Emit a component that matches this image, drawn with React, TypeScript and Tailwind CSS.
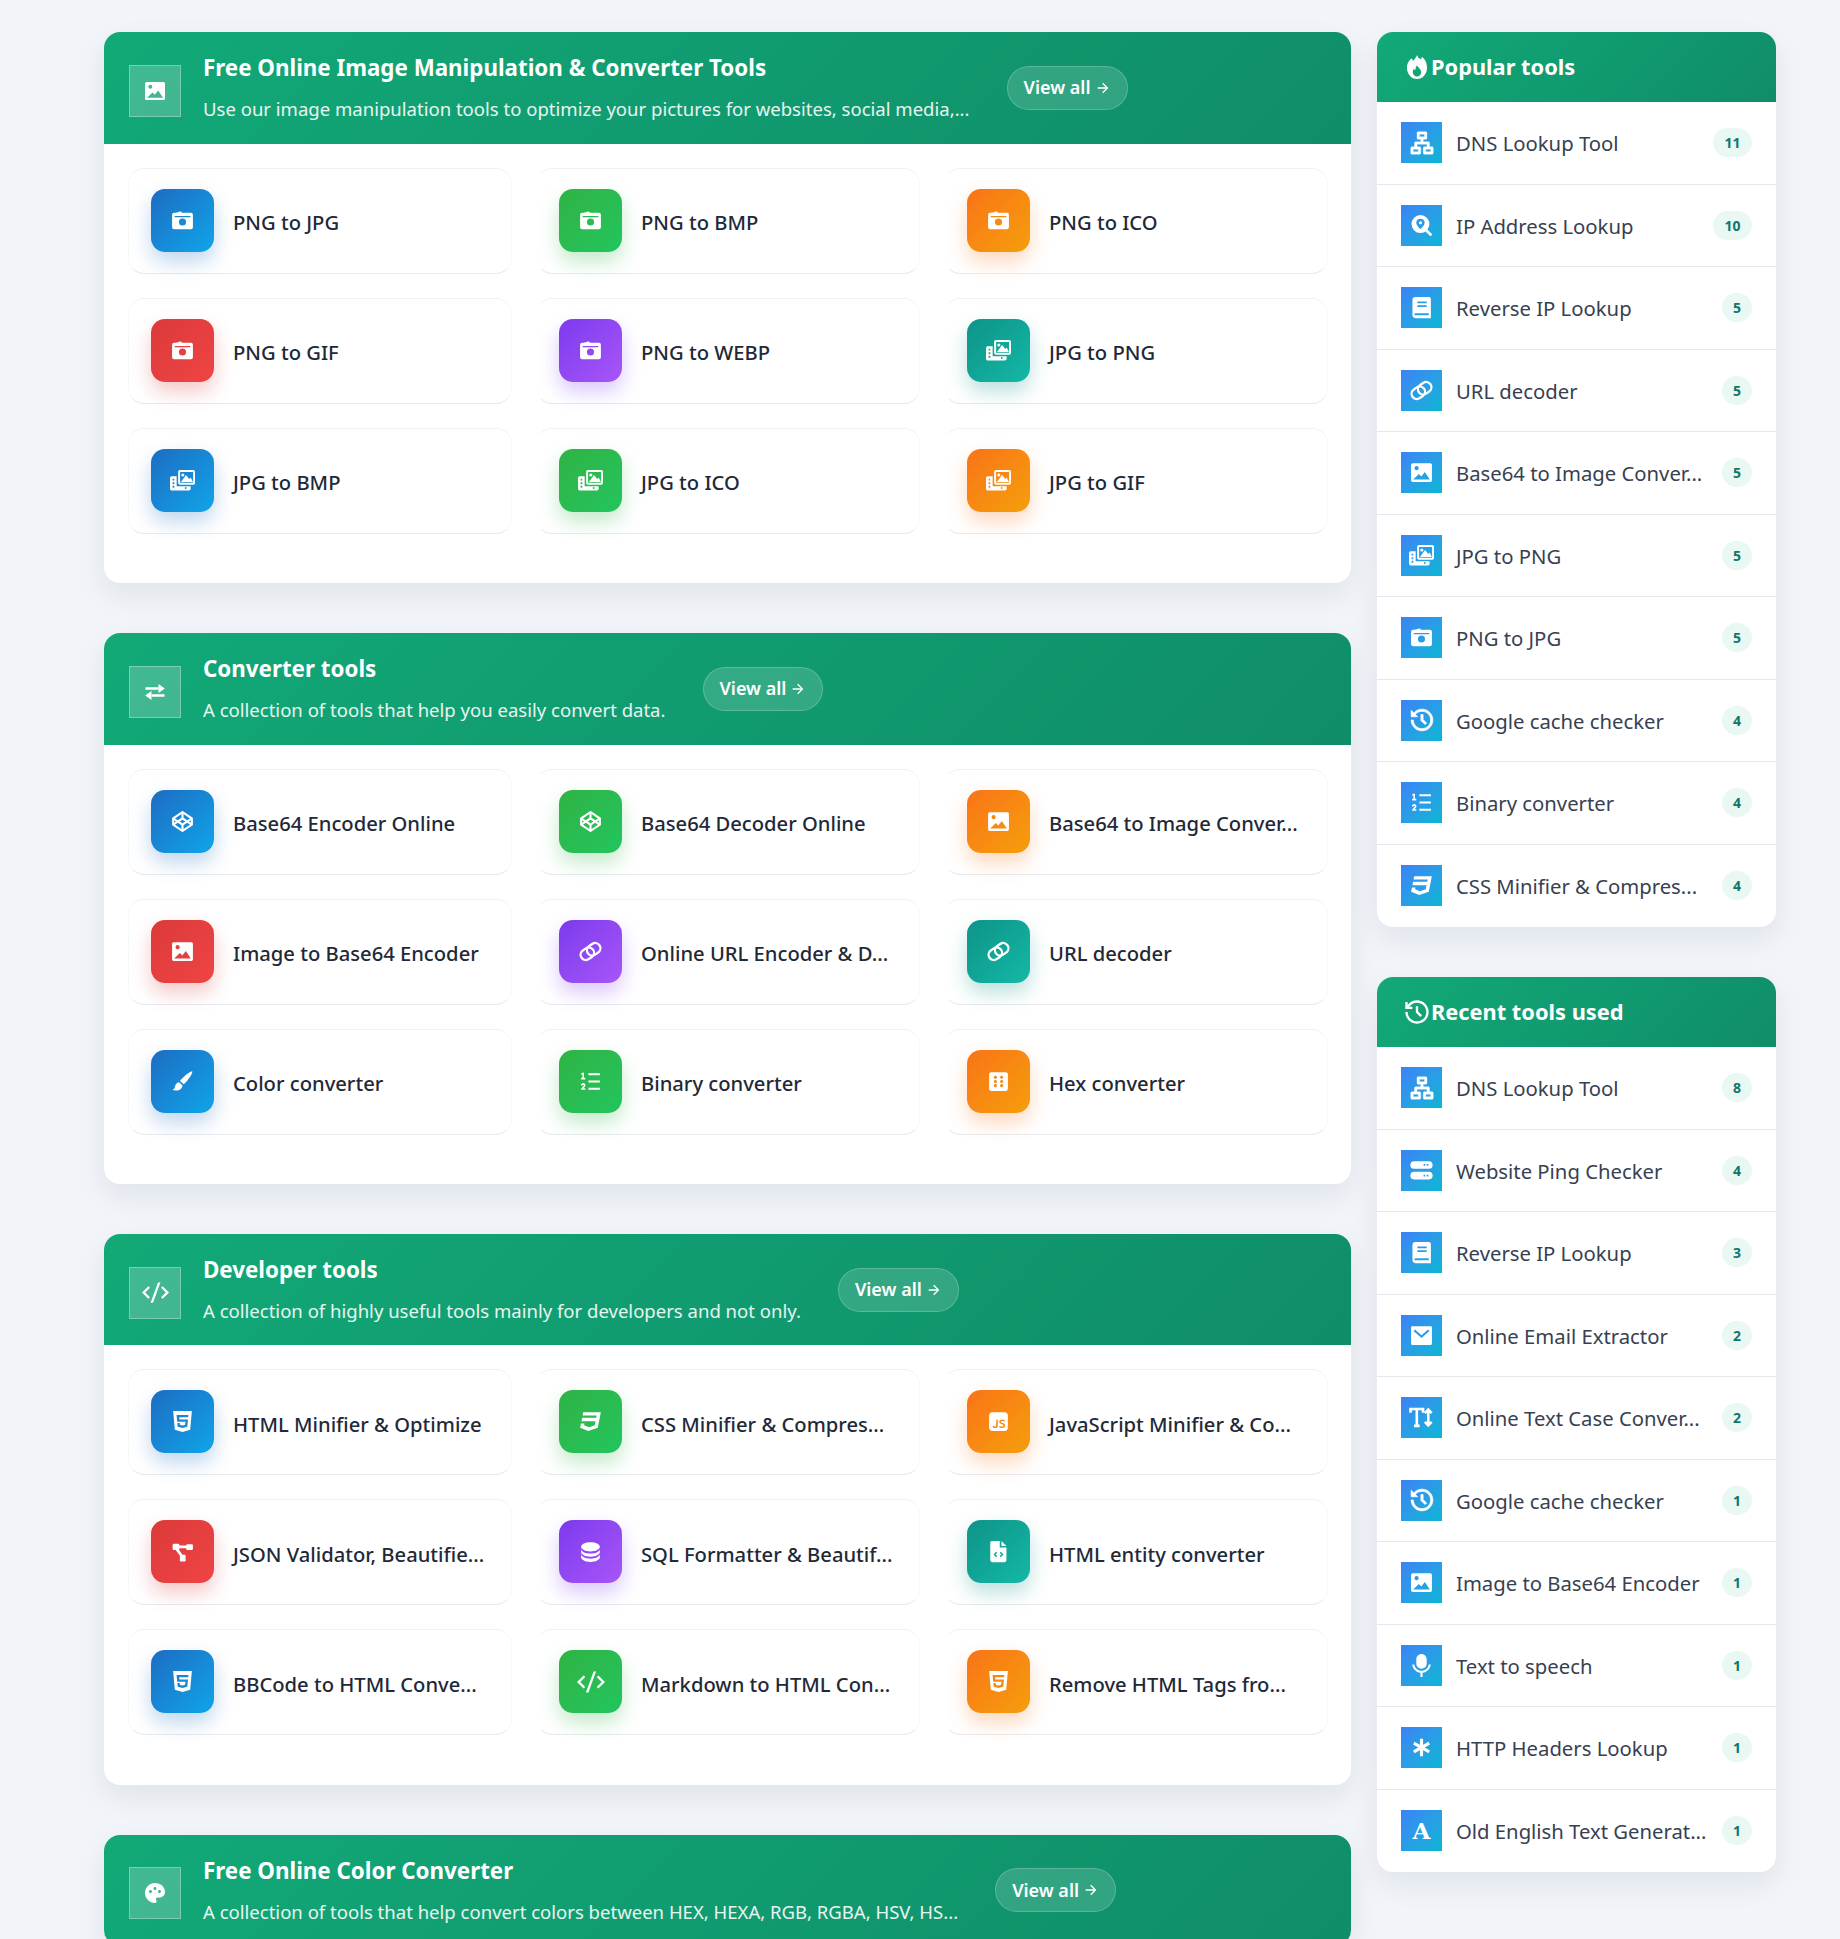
import React from "react";
import {
  RiArrowRightLine,
  RiCodeSSlashFill,
  RiCodepenLine,
  RiCss3Fill,
  RiDatabase2Fill,
  RiDice6Fill,
  RiHistoryFill,
  RiHistoryLine,
  RiHtml5Fill,
  RiJavascriptFill,
  RiListOrdered2,
  RiMailFill,
  RiMicFill,
  RiOrganizationChart,
  RiPaletteFill,
} from "react-icons/ri";

type IconProps = { size?: number };
type Icon = React.ComponentType<IconProps>;
type Tool = { name: string; icon: Icon };
type RankedTool = Tool & { count: number };
type Section = { title: string; text: string; icon: Icon; tools: Tool[] };

// icons the packages don't have in the right shape
const Glyph = ({ size = 24, children }: IconProps & { children: React.ReactNode }) => (
  <svg width={size} height={size} viewBox="0 0 24 24" fill="currentColor">
    {children}
  </svg>
);

const CameraIcon = ({ size }: IconProps) => (
  <Glyph size={size}>
    <path
      fillRule="evenodd"
      d="M5.5 4.6 9.8 3.4c.8-.2 1.3.2 1.5 1.1H20a2 2 0 0 1 2 2v12a2 2 0 0 1-2 2H4a2 2 0 0 1-2-2v-12a2 2 0 0 1 2-1.9ZM4.5 7.6v1.3h15V7.6ZM12 10a3.4 3.4 0 1 0 0 6.8 3.4 3.4 0 0 0 0-6.8Z"
    />
  </Glyph>
);

const PictureIcon = ({ size }: IconProps) => (
  <Glyph size={size}>
    <path
      fillRule="evenodd"
      d="M3.5 3h17A1.5 1.5 0 0 1 22 4.5v15a1.5 1.5 0 0 1-1.5 1.5h-17A1.5 1.5 0 0 1 2 19.5v-15A1.5 1.5 0 0 1 3.5 3Zm3.8 2.8a2 2 0 1 0 0 4 2 2 0 0 0 0-4ZM4 18.8h16l-4.8-7.3-3.4 4.3-2.3-2.3Z"
    />
  </Glyph>
);

const GalleryIcon = ({ size }: IconProps) => (
  <Glyph size={size}>
    <path
      fillRule="evenodd"
      d="M9.5 2h12.8A1.7 1.7 0 0 1 24 3.7v10.6a1.7 1.7 0 0 1-1.7 1.7H9.5a1.7 1.7 0 0 1-1.7-1.7V3.7A1.7 1.7 0 0 1 9.5 2Zm.2 1.8v10.4h12.5V3.8Z"
    />
    <path d="M10.5 13.4 15.4 6.6l3.1 3.9 1.4-1.4 2.1 4.3ZM12.3 5.2a1.5 1.5 0 1 1 0 3 1.5 1.5 0 0 1 0-3Z" />
    <path
      fillRule="evenodd"
      d="M1.6 8H6.4v9.5h13.4v2.4a1.6 1.6 0 0 1-1.6 1.6H1.6A1.6 1.6 0 0 1 0 19.9V9.6A1.6 1.6 0 0 1 1.6 8Zm.9 2.2v1.9h1.6v-1.9Zm0 3.4v1.9h1.6v-1.9Zm0 3.4v1.9h1.6V17Zm12.6 1.3a.9.9 0 1 0 0 1.8.9.9 0 0 0 0-1.8Z"
    />
  </Glyph>
);

const LinkIcon = ({ size }: IconProps) => (
  <Glyph size={size}>
    <g transform="rotate(-35 12 12)" fill="none" stroke="currentColor" strokeWidth="2.2">
      <rect x="1.5" y="7" width="13.5" height="10" rx="5" />
      <rect x="9" y="7" width="13.5" height="10" rx="5" />
    </g>
  </Glyph>
);

const BrushIcon = ({ size }: IconProps) => (
  <Glyph size={size}>
    <path d="M21.4 2.2c.5 2.2-4 8.9-8.2 12.5l-3.6-3.1C12.7 7.4 19.2 2.2 21.4 2.2ZM8.6 12.8l3.4 3c-.4 2.9-2.7 4.9-6.2 4.9-1.6 0-2.8-.3-3.4-.8 1.7-.6 2.1-1.7 2.4-3.1.4-2.1 1.6-3.7 3.8-4Z" />
  </Glyph>
);

const NodesIcon = ({ size }: IconProps) => (
  <Glyph size={size}>
    <path d="M8 7.5h9M6 9l6.5 9" stroke="currentColor" strokeWidth="2.6" fill="none" />
    <rect x="2.5" y="4.5" width="6.5" height="6" rx="1.2" />
    <rect x="15.5" y="5" width="6.5" height="5.5" rx="1.2" />
    <rect x="9.5" y="15" width="5.5" height="6.5" rx="1.2" />
  </Glyph>
);

const FileCodeIcon = ({ size }: IconProps) => (
  <Glyph size={size}>
    <path
      fillRule="evenodd"
      d="M5.8 1.8h7.4v6.4h6.4v12.3a1.7 1.7 0 0 1-1.7 1.7H5.8a1.7 1.7 0 0 1-1.7-1.7V3.5a1.7 1.7 0 0 1 1.7-1.7Zm4 10.4L7.2 14.8l2.6 2.6 1-1-1.6-1.6 1.6-1.6Zm4.4 0-1 1 1.6 1.6-1.6 1.6 1 1 2.6-2.6Z"
    />
    <path d="M14.8 1.8 19.6 6.6h-4.8Z" />
  </Glyph>
);

const SearchPinIcon = ({ size }: IconProps) => (
  <Glyph size={size}>
    <path
      fillRule="evenodd"
      d="M11 2a8.6 8.6 0 1 1 0 17.2A8.6 8.6 0 0 1 11 2Zm0 3.4a4 4 0 0 0-4 4c0 2.6 4 6.2 4 6.2s4-3.6 4-6.2a4 4 0 0 0-4-4Z"
    />
    <circle cx="11" cy="9.4" r="1.5" />
    <path d="M16.5 16.5 21.5 21.5" stroke="currentColor" strokeWidth="2.6" fill="none" />
  </Glyph>
);

const BookIcon = ({ size }: IconProps) => (
  <Glyph size={size}>
    <path
      fillRule="evenodd"
      d="M6.2 1.8H19a2 2 0 0 1 2 2v18.4H6.2a2.9 2.9 0 0 1-2.9-2.9V4.7a2.9 2.9 0 0 1 2.9-2.9ZM8 6.2v1.7h9V6.2Zm0 3.6v1.7h9V9.8Zm-1.8 7.7a1 1 0 0 0 0 2H19v-2Z"
    />
  </Glyph>
);

const ServerIcon = ({ size }: IconProps) => (
  <Glyph size={size}>
    <path
      fillRule="evenodd"
      d="M5 3h14a3 3 0 0 1 0 7.4H5A3 3 0 0 1 5 3Zm9 2.8v1.6h1.6V5.8Zm3 0v1.6h1.6V5.8ZM5 13.2h14a3 3 0 0 1 0 7.4H5a3 3 0 0 1 0-7.4Zm9 2.9v1.6h1.6v-1.6Zm3 0v1.6h1.6v-1.6Z"
    />
  </Glyph>
);

const TextHeightIcon = ({ size }: IconProps) => (
  <Glyph size={size}>
    <path
      d="M1.5 7.5V3.8h12v3.7M7.5 3.8v16M4.8 20h5.4M18.5 4.5v15M15.2 7.8l3.3-3.3 3.3 3.3M15.2 16.2l3.3 3.3 3.3-3.3"
      fill="none"
      stroke="currentColor"
      strokeWidth="2.5"
    />
  </Glyph>
);

const AsteriskIcon = ({ size }: IconProps) => (
  <Glyph size={size}>
    <path d="M12 3.5v17M4.6 7.8l14.8 8.4M19.4 7.8 4.6 16.2" fill="none" stroke="currentColor" strokeWidth="3" />
  </Glyph>
);

const LetterIcon = () => <span className="font-['DejaVu_Serif',serif] text-[23px] font-bold leading-none">A</span>;

const SwapIcon = ({ size }: IconProps) => (
  <Glyph size={size}>
    <path d="M2.5 8.5h13M21.5 15.5h-13" fill="none" stroke="currentColor" strokeWidth="2.6" />
    <path d="M15.5 4 21.8 8.5 15.5 13ZM8.5 11 2.2 15.5 8.5 20Z" />
  </Glyph>
);

const CodeIcon = ({ size = 24 }: IconProps) => <RiCodeSSlashFill size={size + 3} />;

const OrgChartIcon = () => <RiOrganizationChart size={30} stroke="currentColor" strokeWidth={0.3} />;

const HistoryIcon = () => <RiHistoryFill size={26} stroke="currentColor" strokeWidth={0.7} />;

const FlameIcon = ({ size }: IconProps) => (
  <Glyph size={size}>
    <path
      fillRule="evenodd"
      d="M12 1.8c.6 1.6 1.8 3.2 3.2 3.6.5-.6.9-1.3 1-2.2 2.6 1.8 4.4 5 4.4 9.4 0 5.4-3.8 9.7-8.6 9.7s-8.6-4.3-8.6-9.7C3.4 9 5.4 6 7.6 4.6c.2.9.6 1.6 1.2 2.1C10 5.5 11.5 3.6 12 1.8ZM12 10.5c.3 1.6 3.6 3 3.6 6a3.6 3.6 0 0 1-7.2 0c0-1.2.4-2.2 1.1-2.9.2.7.6 1.1 1.2 1.2-.1-1.6.2-3 1.3-4.3Z"
    />
  </Glyph>
);

const tones = [
  "from-[#1c6cc2] to-[#0ea5e9] shadow-[0_10px_20px_rgba(29,111,194,0.28)]",
  "from-[#2fb344] to-[#22c55e] shadow-[0_10px_20px_rgba(47,179,68,0.28)]",
  "from-[#f97316] to-[#f59e0b] shadow-[0_10px_20px_rgba(249,115,22,0.28)]",
  "from-[#dc3a3a] to-[#ef4444] shadow-[0_10px_20px_rgba(220,58,58,0.28)]",
  "from-[#7c3aed] to-[#a855f7] shadow-[0_10px_20px_rgba(124,58,237,0.28)]",
  "from-[#0d9488] to-[#14b8a6] shadow-[0_10px_20px_rgba(13,148,136,0.28)]",
];

const sections: Section[] = [
  {
    title: "Free Online Image Manipulation & Converter Tools",
    text: "Use our image manipulation tools to optimize your pictures for websites, social media,...",
    icon: PictureIcon,
    tools: [
      { name: "PNG to JPG", icon: CameraIcon },
      { name: "PNG to BMP", icon: CameraIcon },
      { name: "PNG to ICO", icon: CameraIcon },
      { name: "PNG to GIF", icon: CameraIcon },
      { name: "PNG to WEBP", icon: CameraIcon },
      { name: "JPG to PNG", icon: GalleryIcon },
      { name: "JPG to BMP", icon: GalleryIcon },
      { name: "JPG to ICO", icon: GalleryIcon },
      { name: "JPG to GIF", icon: GalleryIcon },
    ],
  },
  {
    title: "Converter tools",
    text: "A collection of tools that help you easily convert data.",
    icon: SwapIcon,
    tools: [
      { name: "Base64 Encoder Online", icon: RiCodepenLine },
      { name: "Base64 Decoder Online", icon: RiCodepenLine },
      { name: "Base64 to Image Conver...", icon: PictureIcon },
      { name: "Image to Base64 Encoder", icon: PictureIcon },
      { name: "Online URL Encoder & D...", icon: LinkIcon },
      { name: "URL decoder", icon: LinkIcon },
      { name: "Color converter", icon: BrushIcon },
      { name: "Binary converter", icon: RiListOrdered2 },
      { name: "Hex converter", icon: RiDice6Fill },
    ],
  },
  {
    title: "Developer tools",
    text: "A collection of highly useful tools mainly for developers and not only.",
    icon: CodeIcon,
    tools: [
      { name: "HTML Minifier & Optimize", icon: RiHtml5Fill },
      { name: "CSS Minifier & Compres...", icon: RiCss3Fill },
      { name: "JavaScript Minifier & Co...", icon: RiJavascriptFill },
      { name: "JSON Validator, Beautifie...", icon: NodesIcon },
      { name: "SQL Formatter & Beautif...", icon: RiDatabase2Fill },
      { name: "HTML entity converter", icon: FileCodeIcon },
      { name: "BBCode to HTML Conve...", icon: RiHtml5Fill },
      { name: "Markdown to HTML Con...", icon: CodeIcon },
      { name: "Remove HTML Tags fro...", icon: RiHtml5Fill },
    ],
  },
  {
    title: "Free Online Color Converter",
    text: "A collection of tools that help convert colors between HEX, HEXA, RGB, RGBA, HSV, HS...",
    icon: RiPaletteFill,
    tools: [],
  },
];

const popular: RankedTool[] = [
  { name: "DNS Lookup Tool", icon: OrgChartIcon, count: 11 },
  { name: "IP Address Lookup", icon: SearchPinIcon, count: 10 },
  { name: "Reverse IP Lookup", icon: BookIcon, count: 5 },
  { name: "URL decoder", icon: LinkIcon, count: 5 },
  { name: "Base64 to Image Conver...", icon: PictureIcon, count: 5 },
  { name: "JPG to PNG", icon: GalleryIcon, count: 5 },
  { name: "PNG to JPG", icon: CameraIcon, count: 5 },
  { name: "Google cache checker", icon: HistoryIcon, count: 4 },
  { name: "Binary converter", icon: RiListOrdered2, count: 4 },
  { name: "CSS Minifier & Compres...", icon: RiCss3Fill, count: 4 },
];

const recent: RankedTool[] = [
  { name: "DNS Lookup Tool", icon: OrgChartIcon, count: 8 },
  { name: "Website Ping Checker", icon: ServerIcon, count: 4 },
  { name: "Reverse IP Lookup", icon: BookIcon, count: 3 },
  { name: "Online Email Extractor", icon: RiMailFill, count: 2 },
  { name: "Online Text Case Conver...", icon: TextHeightIcon, count: 2 },
  { name: "Google cache checker", icon: HistoryIcon, count: 1 },
  { name: "Image to Base64 Encoder", icon: PictureIcon, count: 1 },
  { name: "Text to speech", icon: RiMicFill, count: 1 },
  { name: "HTTP Headers Lookup", icon: AsteriskIcon, count: 1 },
  { name: "Old English Text Generat...", icon: LetterIcon, count: 1 },
];

const headerBg = "bg-[linear-gradient(135deg,#12a977,#0f8d69)]";

const ToolCard = ({ tool, index }: { tool: Tool; index: number }) => {
  const Icon = tool.icon;
  return (
    <div
      className={`flex h-[106px] items-center gap-[19px] rounded-2xl border border-b-[#e9ebef] border-r-[#f7f8fa] border-t-[#f1f2f5] bg-white px-[22px] ${
        index % 3 === 0 ? "border-l-[#f7f8fa]" : "border-l-transparent"
      }`}
    >
      <div
        className={`mb-px flex h-[63px] w-[63px] shrink-0 items-center justify-center rounded-[14px] bg-gradient-to-br text-white ${
          tones[index % tones.length]
        }`}
      >
        <Icon size={25} />
      </div>
      <span className="whitespace-nowrap pt-[3px] text-[20.2px] font-medium text-[#1f2937]">{tool.name}</span>
    </div>
  );
};

const ToolSection = ({ section }: { section: Section }) => {
  const Icon = section.icon;
  return (
    <section className="overflow-hidden rounded-2xl bg-white shadow-[0_12px_30px_rgba(30,50,90,0.08)]">
      <div className={`flex h-[111.67px] items-center px-[25px] text-white ${headerBg}`}>
        <div className="mt-[6px] flex h-[52px] w-[52px] shrink-0 items-center justify-center border border-white/30 bg-white/20">
          <Icon size={24} />
        </div>
        <div className="ml-[22px]">
          <h2 className="text-[22.35px] font-bold leading-[30px]">{section.title}</h2>
          <p className="mt-[13px] whitespace-nowrap text-[18.55px] leading-[26px] text-white/90">{section.text}</p>
        </div>
        <a className="ml-[37px] flex h-11 shrink-0 items-center gap-1 rounded-full border border-white/20 bg-white/15 px-4 text-[18px] font-semibold">
          View all
          <RiArrowRightLine size={16} />
        </a>
      </div>
      {section.tools.length > 0 && (
        <div className="grid grid-cols-[repeat(3,384px)] gap-6 px-6 pb-[49.2px] pt-6">
          {section.tools.map((tool, i) => (
            <ToolCard key={tool.name} tool={tool} index={i} />
          ))}
        </div>
      )}
    </section>
  );
};

const SideCard = ({ title, icon: TitleIcon, tools }: { title: string; icon: Icon; tools: RankedTool[] }) => (
  <section className="overflow-hidden rounded-2xl bg-white shadow-[0_12px_30px_rgba(30,50,90,0.08)]">
    <div className={`flex h-[70px] items-center pl-[26px] text-white ${headerBg}`}>
      <TitleIcon size={28} />
      <h3 className="text-[21.8px] font-bold">{title}</h3>
    </div>
    {tools.map((tool, i) => {
      const ToolIcon = tool.icon;
      return (
        <div
          key={tool.name}
          className={`flex h-[82.5px] items-center px-6 ${i < tools.length - 1 ? "border-b border-[#e5e7eb]" : ""}`}
        >
          <div className="flex h-[41px] w-[41px] shrink-0 items-center justify-center bg-gradient-to-br from-[#3b82f6] to-[#06b6d4] text-white">
            <ToolIcon size={25} />
          </div>
          <span className="ml-[14px] whitespace-nowrap pt-px text-[20.3px] text-[#374151]">{tool.name}</span>
          <span
            className={`ml-auto flex h-[29px] items-center justify-center rounded-full bg-[#e9f8f2] text-[14px] font-bold text-[#0f766e] ${
              tool.count > 9 ? "w-[39px]" : "w-[30px]"
            }`}
          >
            {tool.count}
          </span>
        </div>
      );
    })}
  </section>
);

export default function App() {
  return (
    <div className="h-[1939px] overflow-hidden bg-[#f1f4f8] font-['Noto_Sans',sans-serif]">
      <div className="flex items-start gap-[26px] pl-[104px] pr-[64px] pt-8">
        <main className="flex w-[1247px] shrink-0 flex-col gap-[50px]">
          {sections.map((section) => (
            <ToolSection key={section.title} section={section} />
          ))}
        </main>
        <aside className="flex w-[399px] shrink-0 flex-col gap-[50px]">
          <SideCard title="Popular tools" icon={FlameIcon} tools={popular} />
          <SideCard title="Recent tools used" icon={RiHistoryLine} tools={recent} />
        </aside>
      </div>
    </div>
  );
}
